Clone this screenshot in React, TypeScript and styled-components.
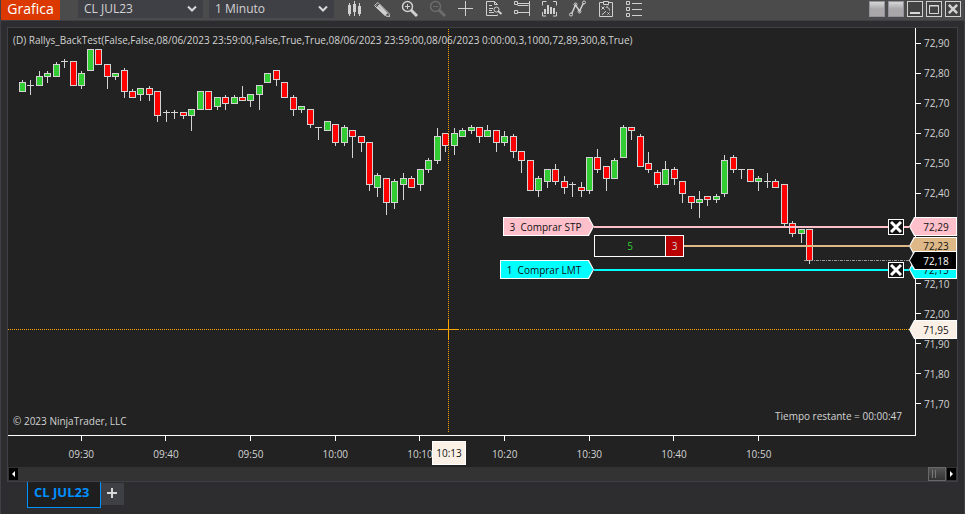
import React from "react";
import styled, { createGlobalStyle, css } from "styled-components";

const GlobalStyle = createGlobalStyle`
  *, *::before, *::after { box-sizing: border-box; }
  body {
    margin: 0;
    background: #2d2d30;
    color: #d3d3d3;
    font-family: "Open Sans", "Noto Sans", sans-serif;
    font-size: 10px;
    line-height: 16px;
  }
  button, select { font: inherit; color: inherit; margin: 0; }
`;

const Window = styled.div`
  display: flex;
  flex-direction: column;
  min-height: 100vh;
  border: solid #3f3f46;
  border-width: 0 1px 1px;
  background: #2d2d30;
`;

const TitleBar = styled.header`
  display: flex;
  align-items: flex-start;
  height: 21px;
  padding-right: 3px;
  background: #4b4b4b;
  border-bottom: 1px solid #3f3f46;
`;

const Title = styled.h1`
  margin: 0 18px 0 0;
  width: 59px;
  height: 20px;
  padding-bottom: 2px;
  background: #dc3900;
  color: #fff;
  font-size: 14px;
  font-weight: 400;
  line-height: 18px;
  text-align: center;
`;

const Picker = styled.label`
  position: relative;
  display: block;
  width: 125px;
  height: 18px;
  margin-right: 6px;
  background: #3f3f46;

  select {
    width: 100%;
    height: 18px;
    padding: 0 20px 0 6px;
    border: 0;
    background: transparent;
    appearance: none;
    font-size: 12px;
    line-height: 18px;
  }
  svg {
    position: absolute;
    right: 6px;
    top: 5px;
    pointer-events: none;
  }
`;

const Tools = styled.div`
  display: flex;
  flex: 1;
  gap: 10px;
  padding-left: 5px;
`;

const ToolButton = styled.button<{ $dim?: boolean }>`
  width: 18px;
  height: 18px;
  padding: 0;
  border: 0;
  background: none;
  color: ${(p) => (p.$dim ? "#6c6c6c" : "#d0d0d0")};
  svg { display: block; }
`;

const WindowButtons = styled.div`
  display: flex;
  gap: 3px;
  padding-top: 1px;
`;

const WindowButton = styled.button<{ $blank?: boolean }>`
  display: grid;
  place-items: center;
  width: 16px;
  height: 16px;
  padding: 0;
  border: 1px solid ${(p) => (p.$blank ? "#93919b" : "#d0d0d0")};
  background: ${(p) => (p.$blank ? "linear-gradient(#d6d6d6, #aaa7ab 50%)" : "#434343")};
`;

const ChartFrame = styled.main`
  display: flex;
  flex: 1;
  flex-direction: column;
  margin: 6px 6px 0;
  border: 1px solid #3f3f46;
  background: #222;
`;

const ChartArea = styled.div`
  position: relative;
  display: grid;
  flex: 1;
  grid-template-columns: minmax(0, 1fr) 41px;
  grid-template-rows: minmax(408px, 1fr) 31px;
`;

const Plot = styled.section`
  position: relative;
  display: flex;
  flex-direction: column;
  justify-content: space-between;
  padding: 4px 13px 6px 5px;
  border: solid #fff;
  border-width: 0 1px 1px 0;
`;

const Candles = styled.svg`
  position: absolute;
  inset: 0;
  width: 100%;
  height: 100%;
`;

const Caption = styled.p`
  position: relative;
  margin: 0;
  white-space: nowrap;
`;

const Footnotes = styled.div`
  position: relative;
  display: flex;
  align-items: flex-end;
  justify-content: space-between;
  height: 21px;
  p:last-child { align-self: flex-start; }
`;

const PriceAxis = styled.ol`
  display: grid;
  grid-template-rows: repeat(13, 1fr);
  margin: 0;
  padding: 0 0 17px;
  list-style: none;
`;

const PriceMark = styled.li`
  display: flex;
  align-items: center;
  gap: 3px;
  &::before {
    content: "";
    width: 5px;
    height: 1px;
    background: #fff;
  }
`;

const TimeAxis = styled.ol`
  display: grid;
  grid-template-columns: repeat(9, 1fr);
  grid-column: 1 / -1;
  margin: 0;
  padding: 0 156px 0 31px;
  list-style: none;
`;

const TimeMark = styled.li`
  display: flex;
  flex-direction: column;
  align-items: center;
  gap: 5px;
  &::before {
    content: "";
    width: 1px;
    height: 5px;
    background: #fff;
  }
`;

const Row = styled.div<{ $top: number; $left: number }>`
  position: absolute;
  top: ${(p) => p.$top}px;
  left: ${(p) => p.$left}px;
  right: 0;
  display: flex;
  align-items: center;
`;

const Line = styled.span<{ $color: string; $short?: boolean }>`
  flex: ${(p) => (p.$short ? "0 0 5px" : "1")};
  height: 2px;
  background: ${(p) => p.$color};
`;

const ThinLine = styled.span<{ $cross?: boolean }>`
  flex: 1;
  height: 1px;
  background: ${(p) =>
    p.$cross
      ? "repeating-linear-gradient(90deg, #ffa500 0 1px, transparent 1px 2px)"
      : "repeating-linear-gradient(90deg, #999 0 3px, transparent 3px 4px, #999 4px 5px, transparent 5px 6px)"};
`;

const rightArrow = "polygon(0 0, calc(100% - 5px) 0, 100% 50%, calc(100% - 5px) 100%, 0 100%)";
const leftArrow = "polygon(5px 0, 100% 0, 100% 100%, 5px 100%, 0 50%)";

const tag = css<{ $color: string }>`
  position: relative;
  display: grid;
  place-items: center;
  height: 19px;
  background: #fff;
  color: #111;
  z-index: 0;
  &::before {
    content: "";
    position: absolute;
    inset: 1px;
    z-index: -1;
    background: ${(p) => p.$color};
  }
`;

const OrderTag = styled.span<{ $color: string; $wide?: boolean }>`
  ${tag}
  width: ${(p) => (p.$wide ? 94 : 91)}px;
  padding-right: 6px;
  clip-path: ${rightArrow};
  white-space: pre;
  &::before { clip-path: ${rightArrow}; }
`;

const PriceTag = styled.span<{ $color: string; $light?: boolean }>`
  ${tag}
  width: 48px;
  padding-left: 6px;
  clip-path: ${leftArrow};
  color: ${(p) => (p.$light ? "#fff" : "#111")};
  &::before { clip-path: ${leftArrow}; }
`;

const CancelButton = styled.button`
  display: grid;
  place-items: center;
  width: 16px;
  height: 16px;
  padding: 0;
  border: 1px solid #fff;
  background: #111;
  color: #fff;
`;

const Position = styled.span`
  display: grid;
  grid-template-columns: 70px 18px;
  width: 90px;
  height: 22px;
  border: 1px solid #fff;
  background: #222;
  line-height: 20px;
  text-align: center;
`;

const Profit = styled.span`
  color: #32cd32;
`;

const Quantity = styled.span`
  border-left: 1px solid #fff;
  background: #b80000;
`;

const TimeTag = styled.span`
  position: absolute;
  left: 424px;
  bottom: 2px;
  width: 34px;
  height: 24px;
  border: 1px solid #fff;
  background: #faf0e6;
  color: #111;
  line-height: 22px;
  text-align: center;
`;

const ScrollBar = styled.div`
  display: flex;
  align-items: center;
  justify-content: space-between;
  height: 14px;
  padding: 0 1px;
  background: #333;
`;

const ScrollArrow = styled.button`
  display: grid;
  place-items: center;
  width: 9px;
  height: 12px;
  padding: 0;
  border: 0;
  background: #000;
  color: #fff;
`;

const ScrollThumb = styled.span`
  display: flex;
  gap: 2px;
  width: 18px;
  height: 14px;
  margin: 0 1px 0 auto;
  padding: 2px 3px;
  border: 1px solid #686868;
  background: linear-gradient(#555, #333);
  &::before, &::after {
    content: "";
    width: 1px;
    background: #777;
  }
`;

const Tabs = styled.nav`
  display: flex;
  align-items: flex-start;
  height: 32px;
  padding-left: 26px;
`;

const Tab = styled.button`
  width: 74px;
  height: 26px;
  padding: 0 0 5px 6px;
  border: 1px solid #0090ff;
  border-top: 0;
  background: #1e1e1e;
  color: #0090ff;
  font-size: 13px;
  font-weight: 700;
  text-align: left;
  white-space: nowrap;
`;

const AddTab = styled.button`
  display: grid;
  place-items: center;
  width: 23px;
  height: 22px;
  margin-top: 1px;
  padding: 0 2px 2px 0;
  border: 0;
  background: #3f3f46;
`;

type Kind = "up" | "down" | "flat";
type Candle = [kind: Kind, high: number, top: number, bottom: number, low: number];

const U = "up" as const;
const D = "down" as const;
const F = "flat" as const;

const candles: Candle[] = [
  [U, 80, 82, 92, 92], [F, 80, 85, 86, 95], [U, 71, 76, 86, 86], [U, 71, 73, 77, 83],
  [U, 62, 64, 77, 77], [F, 59, 61, 62, 68], [D, 61, 61, 86, 86], [U, 71, 73, 86, 89],
  [U, 49, 49, 71, 71], [D, 49, 49, 65, 65], [D, 64, 64, 77, 89], [U, 73, 73, 77, 80],
  [D, 68, 70, 92, 98], [D, 89, 91, 98, 98], [U, 88, 88, 95, 101], [D, 86, 88, 95, 101],
  [D, 91, 91, 116, 122], [F, 110, 112, 113, 122], [F, 110, 112, 113, 119], [D, 112, 112, 116, 119],
  [U, 109, 109, 116, 131], [U, 91, 91, 110, 110], [D, 91, 91, 110, 110], [U, 97, 97, 107, 110],
  [D, 95, 97, 104, 110], [U, 95, 97, 104, 104], [D, 86, 97, 101, 101], [U, 94, 94, 101, 107],
  [U, 85, 85, 95, 110], [U, 73, 73, 83, 83], [D, 70, 70, 80, 86], [D, 82, 82, 98, 98],
  [D, 95, 97, 110, 116], [U, 106, 106, 110, 113], [D, 109, 109, 125, 128], [F, 127, 127, 128, 140],
  [U, 121, 121, 131, 131], [D, 124, 124, 143, 146], [U, 125, 127, 143, 146], [D, 130, 130, 137, 158],
  [D, 136, 136, 143, 152], [D, 142, 142, 185, 191], [U, 173, 175, 188, 197], [D, 178, 178, 203, 215],
  [U, 179, 181, 203, 209], [U, 173, 178, 185, 200], [D, 176, 178, 188, 188], [U, 169, 169, 185, 191],
  [U, 158, 160, 170, 173], [U, 128, 136, 161, 164], [D, 133, 133, 146, 152], [U, 128, 133, 146, 155],
  [U, 128, 130, 137, 137], [U, 125, 127, 131, 134], [D, 127, 127, 137, 143], [U, 125, 130, 137, 137],
  [D, 130, 130, 143, 152], [U, 131, 136, 143, 146], [D, 134, 136, 152, 158], [D, 151, 151, 161, 173],
  [D, 160, 160, 191, 191], [U, 176, 178, 191, 197], [U, 169, 169, 182, 188], [D, 164, 169, 182, 185],
  [D, 176, 181, 188, 194], [F, 182, 184, 185, 197], [D, 182, 187, 191, 197], [U, 157, 157, 191, 194],
  [D, 149, 157, 170, 173], [D, 166, 166, 179, 191], [U, 158, 160, 179, 179], [U, 125, 127, 158, 158],
  [D, 127, 127, 131, 140], [D, 134, 136, 167, 167], [D, 152, 163, 170, 173], [D, 170, 172, 185, 188],
  [U, 161, 169, 185, 185], [D, 167, 169, 179, 185], [D, 181, 181, 194, 203], [D, 196, 196, 203, 209],
  [U, 191, 199, 203, 218], [D, 196, 196, 200, 206], [U, 194, 196, 200, 203], [U, 155, 160, 194, 197],
  [D, 155, 157, 170, 173], [F, 169, 169, 170, 179], [D, 169, 169, 182, 182], [U, 176, 178, 182, 191],
  [F, 173, 181, 182, 188], [D, 179, 181, 188, 188], [D, 184, 184, 224, 226], [D, 221, 223, 234, 237],
  [U, 229, 229, 234, 243], [D, 229, 229, 261, 264],
];

const fills: Record<Kind, string> = { up: "#32cd32", down: "#ff0000", flat: "#d3d3d3" };
const BAR_STEP = (758 - 81) / 80;

const prices = [
  "72,90", "72,80", "72,70", "72,60", "72,50", "72,40", "72,30",
  "72,20", "72,10", "72,00", "71,90", "71,80", "71,70",
];
const times = ["09:30", "09:40", "09:50", "10:00", "10:10", "10:20", "10:30", "10:40", "10:50"];

const glyphs: { name: string; dim?: boolean; art: React.ReactNode }[] = [
  {
    name: "Estilo de barras",
    art: (
      <path fill="currentColor" d="M3 5h1V3h1v2h1v9H5v2H4v-2H3zM8 4h1V1h1v3h1v8h-1v4H9v-4H8zM13 6h1V3h1v3h1v8h-1v2h-1v-2h-1z" />
    ),
  },
  {
    name: "Dibujar",
    art: (
      <>
        <path d="M1.5 5.5 5 2.5l11 11 .5 3-3.500-.5z" fill="none" stroke="currentColor" />
        <path d="m5 4.500 9 9.500M3 6l9.500 9" stroke="currentColor" strokeWidth="2" />
        <path d="m2.500 7.500 4-4" stroke="#4b4b4b" />
      </>
    ),
  },
  {
    name: "Acercar",
    art: (
      <g fill="none" stroke="currentColor">
        <circle cx="6.500" cy="6.500" r="5" strokeWidth="1.500" />
        <path d="M4 6.500h5M6.500 4v5" />
        <path d="m10 10 6 6" strokeWidth="3" />
      </g>
    ),
  },
  {
    name: "Alejar",
    dim: true,
    art: (
      <g fill="none" stroke="currentColor">
        <circle cx="6.500" cy="6.500" r="5" strokeWidth="1.500" />
        <path d="M4 6.500h5" />
        <path d="m10 10 6 6" strokeWidth="3" />
      </g>
    ),
  },
  { name: "Cursor en cruz", art: <path d="M1 8.500h15M8.500 1v15" stroke="currentColor" /> },
  {
    name: "Caja de datos",
    art: (
      <g fill="none" stroke="currentColor">
        <path d="M12.500 5V4.500l-3-3h-8v14h11v-1M9.500 1.500v3h3M4 5.500h3M4 8.500h4M4 10.500h3M4 12.500h5" />
        <circle cx="11.500" cy="9.500" r="2.500" />
        <path d="m13 11 3.500 3" strokeWidth="2" />
      </g>
    ),
  },
  {
    name: "Chart Trader",
    art: (
      <g fill="none" stroke="currentColor">
        <path d="M1.500 1.500h3v3h-3zM1.500 10.500h3v3h-3zM4.500 3.500h12M4.500 12.500h12M4.500 5.500h11" />
        <path d="M16.500 1v15" />
      </g>
    ),
  },
  {
    name: "Series de datos",
    art: (
      <g fill="none" stroke="currentColor">
        <path d="M1.500 5.500v-4h4M12 1.500h3.500v4M15.500 12v4H12M5 16H1.500v-4" />
        <path d="M4 9v5M7 5v9M10 7v7M13 8v6" strokeWidth="2" />
      </g>
    ),
  },
  {
    name: "Indicadores",
    art: (
      <g fill="none" stroke="currentColor">
        <path d="m2.500 14 4-9 4 6 4-8" strokeWidth="1.500" />
        <circle cx="2" cy="14.500" r="1.500" />
        <circle cx="6.500" cy="4.500" r="1.500" />
        <circle cx="10.500" cy="11.500" r="1.500" />
        <circle cx="15" cy="2.500" r="1.500" />
      </g>
    ),
  },
  {
    name: "Estrategias",
    art: (
      <g fill="none" stroke="currentColor">
        <path d="M6 2.500H2.500v14h13v-14H12M6.500 1.500h5v3h-5z" />
        <path d="m4.500 6.500 3 3m0-3-3 3M9.500 7.500c2 0 3 1 3 3M9 7.500l2-2M10.500 12.500l2 2m0-2-2 2M5 14.500c2 0 2-3 4-3" />
      </g>
    ),
  },
  {
    name: "Propiedades",
    art: (
      <path
        d="M1.500 1.500h3v3h-3zM1.500 7.500h3v3h-3zM1.500 13.500h3v3h-3zM7 3.500h10M7 9.500h10M7 15.500h10"
        fill="none"
        stroke="currentColor"
      />
    ),
  },
];

function Chevron() {
  return (
    <svg width="10" height="8" viewBox="0 0 10 8" aria-hidden="true">
      <path d="m1 1.500 4 4 4-4" fill="none" stroke="#d8d8d8" strokeWidth="2" />
    </svg>
  );
}

function Cross({ size }: { size: number }) {
  return (
    <svg width={size} height={size} viewBox="0 0 12 12" aria-hidden="true">
      <path d="m1 1 10 10m0-10L1 11" stroke="currentColor" strokeWidth="3" />
    </svg>
  );
}

function CandleChart() {
  return (
    <Candles aria-label="Velas de CL JUL23" shapeRendering="crispEdges">
      <g transform="translate(-8 -28)">
        {candles.map(([kind, high, top, bottom, low], i) => {
          const x = Math.round(22 + i * BAR_STEP);
          return (
            <g key={i}>
              <rect x={x} y={high} width="1" height={low - high} fill="#d3d3d3" />
              <rect x={x - 3} y={top} width="7" height={bottom - top} fill="#d3d3d3" />
              {kind !== "flat" && (
                <rect x={x - 2} y={top + 1} width="5" height={bottom - top - 2} fill={fills[kind]} />
              )}
            </g>
          );
        })}
        <path d="M448.500 29v404" stroke="#ffa500" strokeDasharray="1 1" />
        <path d="M438 329.500h21M448.500 319v21" stroke="#ffa500" />
      </g>
    </Candles>
  );
}

export default function App() {
  return (
    <>
      <GlobalStyle />
      <Window>
        <TitleBar>
          <Title>Grafica</Title>
          <Picker>
            <select aria-label="Instrumento">
              <option>CL JUL23</option>
            </select>
            <Chevron />
          </Picker>
          <Picker>
            <select aria-label="Intervalo">
              <option>1 Minuto</option>
            </select>
            <Chevron />
          </Picker>
          <Tools>
            {glyphs.map((g) => (
              <ToolButton key={g.name} aria-label={g.name} $dim={g.dim} disabled={g.dim}>
                <svg width="18" height="18" viewBox="0 0 18 18">{g.art}</svg>
              </ToolButton>
            ))}
          </Tools>
          <WindowButtons>
            <WindowButton $blank aria-label="Enlace de instrumento" />
            <WindowButton $blank aria-label="Enlace de intervalo" />
            <WindowButton aria-label="Minimizar">
              <svg width="14" height="14"><path d="M2 11h10" stroke="#d8d8d8" strokeWidth="2" /></svg>
            </WindowButton>
            <WindowButton aria-label="Maximizar">
              <svg width="14" height="14">
                <path d="M2.500 3.500h9v8h-9zM2 4h10" fill="none" stroke="#d8d8d8" />
              </svg>
            </WindowButton>
            <WindowButton aria-label="Cerrar"><Cross size={10} /></WindowButton>
          </WindowButtons>
        </TitleBar>

        <ChartFrame>
          <ChartArea>
            <Plot>
              <CandleChart />
              <Caption>
                (D) Rallys_BackTest(False,False,08/06/2023 23:59:00,False,True,True,08/06/2023 23:59:00,08/06/2023
                {" "}0:00:00,3,1000,72,89,300,8,True)
              </Caption>
              <Footnotes>
                <Caption>© 2023 NinjaTrader, LLC</Caption>
                <Caption>Tiempo restante = 00:00:47</Caption>
              </Footnotes>
            </Plot>
            <PriceAxis>
              {prices.map((p) => <PriceMark key={p}>{p}</PriceMark>)}
            </PriceAxis>
            <TimeAxis>
              {times.map((t) => <TimeMark key={t}>{t}</TimeMark>)}
            </TimeAxis>

            <Row $top={189} $left={495}>
              <OrderTag $color="#ffc0cb">3  Comprar STP</OrderTag>
              <Line $color="#ffc0cb" />
              <CancelButton aria-label="Cancelar STP"><Cross size={12} /></CancelButton>
              <Line $color="#ffc0cb" $short />
              <PriceTag $color="#ffc0cb">72,29</PriceTag>
            </Row>
            <Row $top={207} $left={586}>
              <Position>
                <Profit>5</Profit>
                <Quantity>3</Quantity>
              </Position>
              <Line $color="#deb887" />
              <PriceTag $color="#deb887">72,23</PriceTag>
            </Row>
            <Row $top={232} $left={492}>
              <OrderTag $color="#00ffff" $wide>1  Comprar LMT</OrderTag>
              <Line $color="#00ffff" />
              <CancelButton aria-label="Cancelar LMT"><Cross size={12} /></CancelButton>
              <Line $color="#00ffff" $short />
              <PriceTag $color="#00ffff">72,15</PriceTag>
            </Row>
            <Row $top={223} $left={796}>
              <ThinLine />
              <PriceTag $color="#000" $light>72,18</PriceTag>
            </Row>
            <Row $top={292} $left={0}>
              <ThinLine $cross />
              <PriceTag $color="#faf0e6">71,95</PriceTag>
            </Row>
            <TimeTag>10:13</TimeTag>
          </ChartArea>
          <ScrollBar>
            <ScrollArrow aria-label="Anterior">
              <svg width="5" height="6"><path d="M4 0v6L1 3z" fill="currentColor" /></svg>
            </ScrollArrow>
            <ScrollThumb />
            <ScrollArrow aria-label="Siguiente">
              <svg width="5" height="6"><path d="M1 0v6l3-3z" fill="currentColor" /></svg>
            </ScrollArrow>
          </ScrollBar>
        </ChartFrame>
        <Tabs>
          <Tab>CL JUL23</Tab>
          <AddTab aria-label="Nueva pestaña">
            <svg width="12" height="12"><path d="M1 6h10M6 1v10" stroke="#d8d8d8" strokeWidth="2" /></svg>
          </AddTab>
        </Tabs>
      </Window>
    </>
  );
}
